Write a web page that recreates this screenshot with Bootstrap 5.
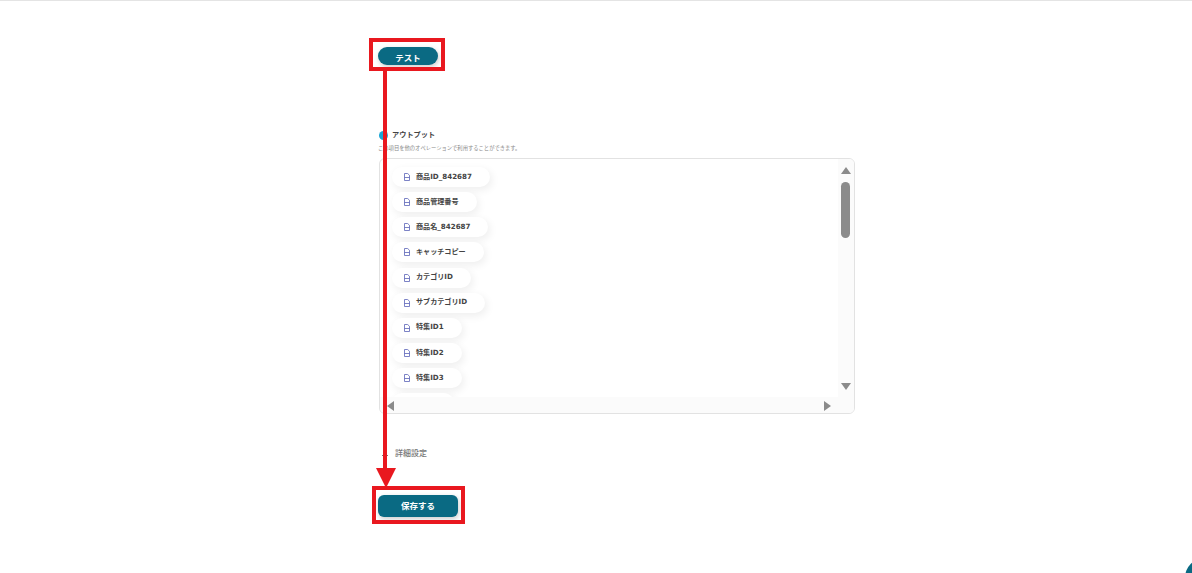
<!DOCTYPE html>
<html lang="ja">
<head>
<meta charset="utf-8">
<title>テスト</title>
<link href="https://cdn.jsdelivr.net/npm/bootstrap@5.3.0/dist/css/bootstrap.min.css" rel="stylesheet">
<style>
html,body{height:573px;overflow:hidden}
body{background:#fff;font-family:"DejaVu Sans","Noto Sans CJK JP",sans-serif;position:relative;border-top:1px solid #e4e4e4}
.pane{width:476px;margin-left:379px}
.btn-test{width:60px;height:18px;margin-top:46px;margin-left:-1px;background:#0a6a83;color:#fff;border:0;border-radius:9px;font-size:8.5px;font-weight:700;line-height:18px;padding:2px 0 0;box-shadow:1px 2px 5px rgba(0,0,0,.2);display:block}
.out-head{margin-top:62px;height:16px;gap:4px;font-size:7.2px;font-weight:700;color:#444}
.dot{width:9px;height:9px;border-radius:50%;background:#1aa6d6;display:block}
.out-note{font-size:5.3px;color:#8a8a8a;line-height:8px;margin-top:1px;margin-left:-1px;white-space:nowrap}
.scrollbox{height:256px;margin-top:6px;border:1px solid #e2e2e2;border-radius:6px;overflow:hidden;position:relative}
.pill-list{padding:8px 0 0 12px;gap:5.13px;height:238px;overflow:hidden}
.pill{height:20px;border-radius:10px;background:#fff;box-shadow:2px 3px 9px rgba(0,0,0,.07);padding-left:12px;padding-right:18px;gap:6px;font-size:7.1px;font-weight:700;color:#444;white-space:nowrap}
.pill-cut{width:62px}
.vtrack{position:absolute;top:0;right:0;width:16px;height:238px;background:#fbfbfb}
.htrack{position:absolute;left:0;right:0;bottom:0;height:16px;background:#fbfbfb}
.thumb{position:absolute;top:23px;left:3px;width:9px;height:56px;border-radius:5px;background:#8b8b8b}
.arr{position:absolute;width:0;height:0;border-style:solid;border-color:transparent}
.arr-up{top:8px;left:3px;border-width:0 5px 7px;border-bottom-color:#8b8b8b}
.arr-down{bottom:7px;left:3px;border-width:7px 5px 0;border-top-color:#8b8b8b}
.arr-left{left:7px;top:4px;border-width:5px 7px 5px 0;border-right-color:#8b8b8b}
.arr-right{right:23px;top:4px;border-width:5px 0 5px 7px;border-left-color:#8b8b8b}
.detail{margin-top:32px;height:16px;gap:6px;font-size:8px;font-weight:500;color:#777;margin-left:2px}
.btn-save{width:80px;height:22px;margin-top:33px;margin-left:-1px;background:#0a6a83;color:#fff;border:0;border-radius:6px;font-size:8.5px;font-weight:700;padding:0;display:block;box-shadow:1px 2px 5px rgba(0,0,0,.2)}
.mark-box{position:absolute;border:4px solid #e9181f}
.box-a{left:369px;top:37px;width:76px;height:33px}
.box-b{left:372px;top:485px;width:93px;height:38px}
.arrow-line{position:absolute;left:383px;top:69px;width:4px;height:400px;background:#e9181f}
.arrow-head{position:absolute;left:376px;top:467px;border-style:solid;border-color:transparent;border-width:20px 10px 0;border-top-color:#e9181f;width:0;height:0}
.fab{position:absolute;left:1185px;top:557px;width:40px;height:40px;border-radius:50%;background:#0a6a83}
</style>
</head>
<body>
<div class="pane">
  <button class="btn-test" type="button">テスト</button>
  <div class="out-head d-flex align-items-center"><span class="dot"></span><span>アウトプット</span></div>
  <div class="out-note">この項目を他のオペレーションで利用することができます。</div>
  <div class="scrollbox bg-white">
    <div class="pill-list d-flex flex-column align-items-start">
      <div class="pill d-flex align-items-center flex-shrink-0"><svg width="6" height="8" viewBox="0 0 6 8" fill="none" stroke="#5a63b8" stroke-width=".8"><path d="M.5.5h3.2l1.8 1.8v5.2h-5zM.5 4.5h5"/></svg><span>商品ID_842687</span></div>
      <div class="pill d-flex align-items-center flex-shrink-0"><svg width="6" height="8" viewBox="0 0 6 8" fill="none" stroke="#5a63b8" stroke-width=".8"><path d="M.5.5h3.2l1.8 1.8v5.2h-5zM.5 4.5h5"/></svg><span>商品管理番号</span></div>
      <div class="pill d-flex align-items-center flex-shrink-0"><svg width="6" height="8" viewBox="0 0 6 8" fill="none" stroke="#5a63b8" stroke-width=".8"><path d="M.5.5h3.2l1.8 1.8v5.2h-5zM.5 4.5h5"/></svg><span>商品名_842687</span></div>
      <div class="pill d-flex align-items-center flex-shrink-0"><svg width="6" height="8" viewBox="0 0 6 8" fill="none" stroke="#5a63b8" stroke-width=".8"><path d="M.5.5h3.2l1.8 1.8v5.2h-5zM.5 4.5h5"/></svg><span>キャッチコピー</span></div>
      <div class="pill d-flex align-items-center flex-shrink-0"><svg width="6" height="8" viewBox="0 0 6 8" fill="none" stroke="#5a63b8" stroke-width=".8"><path d="M.5.5h3.2l1.8 1.8v5.2h-5zM.5 4.5h5"/></svg><span>カテゴリID</span></div>
      <div class="pill d-flex align-items-center flex-shrink-0"><svg width="6" height="8" viewBox="0 0 6 8" fill="none" stroke="#5a63b8" stroke-width=".8"><path d="M.5.5h3.2l1.8 1.8v5.2h-5zM.5 4.5h5"/></svg><span>サブカテゴリID</span></div>
      <div class="pill d-flex align-items-center flex-shrink-0"><svg width="6" height="8" viewBox="0 0 6 8" fill="none" stroke="#5a63b8" stroke-width=".8"><path d="M.5.5h3.2l1.8 1.8v5.2h-5zM.5 4.5h5"/></svg><span>特集ID1</span></div>
      <div class="pill d-flex align-items-center flex-shrink-0"><svg width="6" height="8" viewBox="0 0 6 8" fill="none" stroke="#5a63b8" stroke-width=".8"><path d="M.5.5h3.2l1.8 1.8v5.2h-5zM.5 4.5h5"/></svg><span>特集ID2</span></div>
      <div class="pill d-flex align-items-center flex-shrink-0"><svg width="6" height="8" viewBox="0 0 6 8" fill="none" stroke="#5a63b8" stroke-width=".8"><path d="M.5.5h3.2l1.8 1.8v5.2h-5zM.5 4.5h5"/></svg><span>特集ID3</span></div>
      <div class="pill pill-cut flex-shrink-0"></div>
    </div>
    <div class="vtrack"><span class="arr arr-up"></span><span class="thumb"></span><span class="arr arr-down"></span></div>
    <div class="htrack"><span class="arr arr-left"></span><span class="arr arr-right"></span></div>
  </div>
  <div class="detail d-flex align-items-center"><svg width="8" height="5" viewBox="0 0 8 5" fill="none" stroke="#777" stroke-width="1"><path d="M1 4l3-3 3 3"/></svg><span>詳細設定</span></div>
  <button class="btn-save" type="button">保存する</button>
</div>
<div class="arrow-line"></div>
<div class="arrow-head"></div>
<div class="mark-box box-a"></div>
<div class="mark-box box-b"></div>
<div class="fab"></div>
<script src="https://cdn.jsdelivr.net/npm/bootstrap@5.3.0/dist/js/bootstrap.bundle.min.js"></script>
</body>
</html>
